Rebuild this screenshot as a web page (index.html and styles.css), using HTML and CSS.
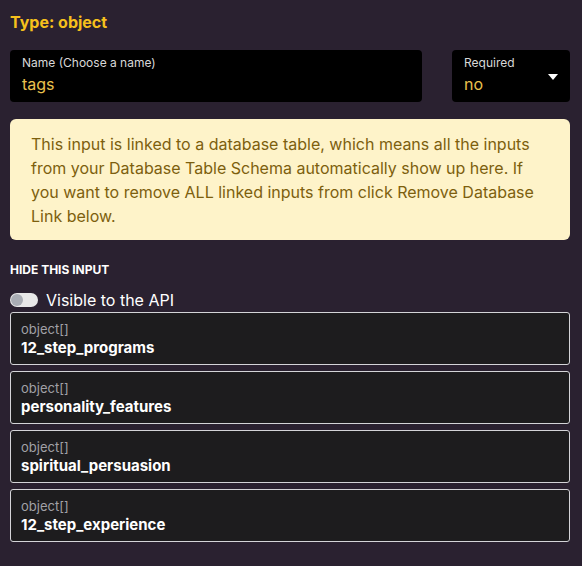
FILE: index.html
```html
<!DOCTYPE html>
<html>
<head>
<meta charset="utf-8">
<link rel="stylesheet" href="styles.css">
</head>
<body>
<div class="panel">
  <div class="title">Type: object</div>
  <div class="fields">
    <div class="field field-name">
      <div class="field-label">Name (Choose a name)</div>
      <div class="field-value">tags</div>
    </div>
    <div class="field field-req">
      <div class="field-label">Required</div>
      <div class="field-value">no</div>
      <svg class="caret" width="10" height="6" viewBox="0 0 10 6"><path d="M0 0 L10 0 L5 6 Z" fill="#fff"/></svg>
    </div>
  </div>
  <div class="notice">This input is linked to a database table, which means all the inputs from your Database Table Schema automatically show up here. If you want to remove ALL linked inputs from click Remove Database Link below.</div>
  <div class="section-label">HIDE THIS INPUT</div>
  <div class="toggle-row">
    <span class="toggle"><span class="knob"></span></span>
    <span class="toggle-text">Visible to the API</span>
  </div>
  <div class="cards">
    <div class="card"><div class="card-type">object[]</div><div class="card-name">12_step_programs</div></div>
    <div class="card"><div class="card-type">object[]</div><div class="card-name">personality_features</div></div>
    <div class="card"><div class="card-type">object[]</div><div class="card-name">spiritual_persuasion</div></div>
    <div class="card"><div class="card-type">object[]</div><div class="card-name">12_step_experience</div></div>
  </div>
</div>
</body>
</html>
```
FILE: styles.css
```css
html, body {
  margin: 0;
  padding: 0;
  background: #2a2130;
  font-family: Inter, "Liberation Sans", sans-serif;
}
.panel {
  padding: 12px 12px 0 10px;
  width: 560px;
}
.title {
  color: #f6c01c;
  font-weight: 700;
  font-size: 16px;
  line-height: 20px;
}
.fields {
  display: flex;
  gap: 30px;
  margin-top: 18px;
}
.field {
  background: #000;
  border-radius: 4px;
  padding: 6px 12px 8px 12px;
  position: relative;
}
.field-name { flex: 1; }
.field-req { width: 94px; flex: none; }
.field-label {
  color: #d8d8d8;
  font-size: 12px;
  line-height: 14px;
}
.field-value {
  color: #eac24e;
  font-size: 16px;
  line-height: 20px;
  margin-top: 4px;
}
.caret {
  position: absolute;
  right: 12px;
  top: 24px;
}
.notice {
  margin-top: 17px;
  background: #fef3c9;
  color: #7d5f0e;
  border-radius: 6px;
  padding: 13px 21px 12px 21px;
  font-size: 16px;
  line-height: 24px;
}
.section-label {
  margin-top: 22px;
  color: #fff;
  font-weight: 700;
  font-size: 12px;
  line-height: 16px;
}
.toggle-row {
  margin-top: 12px;
  display: flex;
  align-items: center;
  gap: 8px;
  height: 20px;
}
.toggle {
  width: 28px;
  height: 14px;
  border-radius: 7px;
  background: #e8e8e8;
  position: relative;
  display: inline-block;
}
.knob {
  position: absolute;
  left: 1px;
  top: 1px;
  width: 12px;
  height: 12px;
  border-radius: 50%;
  background: #a9adb4;
}
.toggle-text {
  color: #fff;
  font-size: 16px;
}
.cards {
  margin-top: 2px;
  display: flex;
  flex-direction: column;
  gap: 6px;
}
.card {
  background: #1d1c1e;
  border: 1px solid #d4d4d8;
  border-radius: 3px;
  padding: 8px 10px 6px 10px;
}
.card-type {
  color: #a1a1a6;
  font-size: 13px;
  line-height: 16px;
}
.card-name {
  color: #fff;
  font-weight: 700;
  font-size: 15px;
  line-height: 21px;
}
```
